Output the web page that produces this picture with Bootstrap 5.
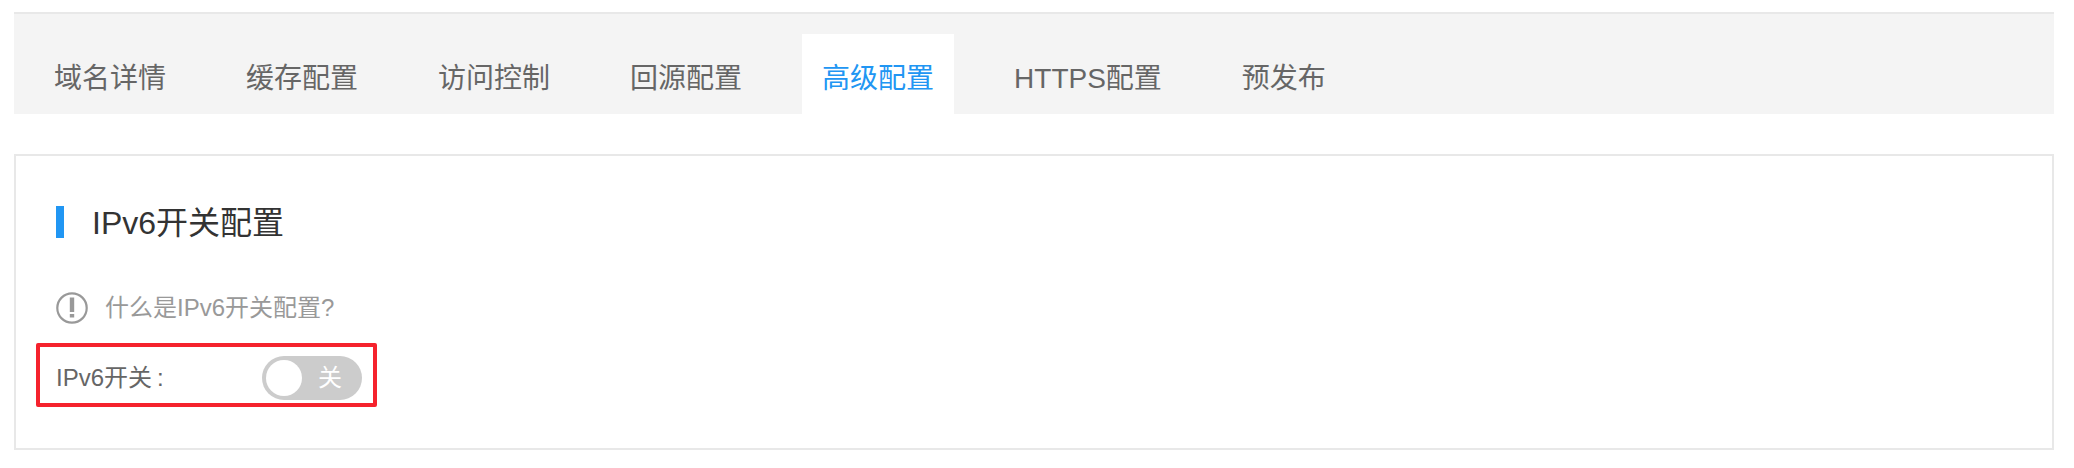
<!DOCTYPE html>
<html lang="zh-CN">
    <head>
        <meta charset="UTF-8">
        <title>高级配置</title>
        <link href="https://cdn.jsdelivr.net/npm/bootstrap@5.3.0/dist/css/bootstrap.min.css" rel="stylesheet">
        <style>
            body { font-family: "Liberation Sans", "Noto Sans CJK SC", sans-serif; background: #fff; }
            .page-wrap { padding: 12px 20px 18px 14px; }
            .tab-bar { height: 102px; padding: 20px 0 0 20px; gap: 40px; background: #f4f4f4; border-top: 2px solid #e8e8e8; }
            .tab-bar .nav-link { height: 80px; padding: 11px 20px 0; line-height: 68px; font-size: 28px; color: #666; border-radius: 0; }
            .tab-bar .nav-link.active { background: #fff; color: #2196f3; }
            .conf-card { height: 296px; margin-top: 40px; border: 2px solid #e8e8e8; border-radius: 0; }
            .conf-card .card-body { padding: 50px 0 0 40px; }
            .conf-title { height: 32px; padding-left: 28px; border-left: 8px solid #2196f3; font-size: 32px; line-height: 34px; font-weight: 400; color: #333; }
            .conf-hint { margin-top: 54px; gap: 17px; height: 32px; font-size: 24px; color: #999; }
            .switch-row { width: 341px; height: 64px; margin: 19px 0 0 -20px; padding: 6px 11px 0 16px; border: 4px solid #f5222d; border-radius: 2px; font-size: 24px; color: #666; }
            .colon-gap { margin-left: 5px; }
            .switch-box { width: 100px; height: 44px; padding: 4px; border-radius: 22px; background: #ccc; color: #fff; font-size: 24px; }
            .switch-knob { width: 36px; height: 36px; border-radius: 50%; background: #fff; }
            .switch-text { margin-left: 16px; line-height: 36px; }
        </style>
    </head>
    <body>
        <div class="page-wrap">
            <ul class="nav tab-bar">
                <li class="nav-item"><a class="nav-link" href="#">域名详情</a></li>
                <li class="nav-item"><a class="nav-link" href="#">缓存配置</a></li>
                <li class="nav-item"><a class="nav-link" href="#">访问控制</a></li>
                <li class="nav-item"><a class="nav-link" href="#">回源配置</a></li>
                <li class="nav-item"><a class="nav-link active" href="#">高级配置</a></li>
                <li class="nav-item"><a class="nav-link" href="#">HTTPS配置</a></li>
                <li class="nav-item"><a class="nav-link" href="#">预发布</a></li>
            </ul>

            <div class="card conf-card">
                <div class="card-body">
                    <h5 class="conf-title mb-0">IPv6开关配置</h5>
                    <div class="conf-hint d-flex align-items-center">
                        <svg width="32" height="32" viewBox="0 0 32 32">
                            <circle cx="16" cy="16" r="14.7" fill="none" stroke="#999" stroke-width="2.2"/>
                            <rect x="13.8" y="5.5" width="4.4" height="14.5" fill="#999"/>
                            <rect x="13.8" y="22" width="4.4" height="3.5" fill="#999"/>
                        </svg>
                        <span>什么是IPv6开关配置?</span>
                    </div>
                    <div class="switch-row d-flex align-items-center justify-content-between">
                        <span>IPv6开关<span class="colon-gap">:</span></span>
                        <div class="switch-box d-flex align-items-center">
                            <div class="switch-knob"></div>
                            <span class="switch-text">关</span>
                        </div>
                    </div>
                </div>
            </div>
        </div>
        <script src="https://cdn.jsdelivr.net/npm/bootstrap@5.3.0/dist/js/bootstrap.bundle.min.js"></script>
    </body>
</html>
